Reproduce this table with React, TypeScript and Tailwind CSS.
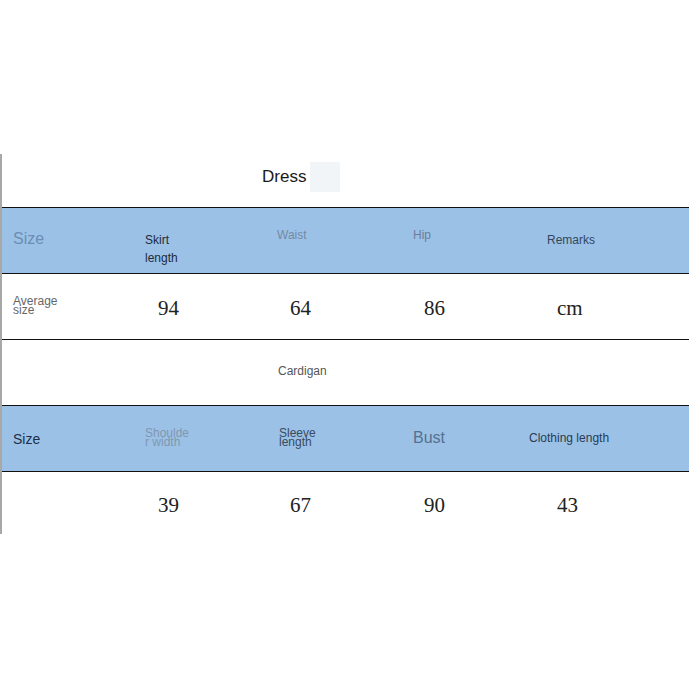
const sans = { fontFamily: '"Liberation Sans", Arial, sans-serif' };

const cols = "grid grid-cols-[143px_132px_136px_134px_1fr]";
const num = "font-['Liberation_Serif',serif] text-[21px] leading-[21px] text-[#222]";

export default function App() {
  return (
    <div className="h-[689px] w-[689px] bg-white" style={sans}>
      <div className="pt-[154px]">
        <div className="border-l-2 border-[#a8a8a8]">
          {/* Dress title */}
          <div className="flex h-[54px] items-start border-b border-[#111] pl-[260px] pt-[14px] leading-[17px]">
            <span className="text-[17px] leading-[17px] text-[#1a1a1a]">Dress</span>
            <span className="ml-[4px] -mt-[6px] h-[30px] w-[30px] bg-[#f2f5f7]" />
          </div>

          {/* Dress header */}
          <div className={`${cols} h-[66px] border-b border-[#111] bg-[#9bc2e6]`}>
            <div className="pl-[11px] pt-[23px] text-[16px] leading-[16px] text-[#6d8db5]">Size</div>
            <div className="pt-[23px] text-[12px] leading-[18px] text-[#1d2b3c]">
              Skirt
              <br />
              length
            </div>
            <div className="pt-[20px] text-[12px] leading-[14px] text-[#7589a5]">Waist</div>
            <div className="pt-[20px] text-[12px] leading-[14px] text-[#6b7e98]">Hip</div>
            <div className="pt-[25px] text-[12px] leading-[14px] text-[#34465c]">Remarks</div>
          </div>

          {/* Dress values */}
          <div className={`${cols} h-[66px] border-b border-[#111]`}>
            <div className="pl-[11px] pt-[23px] text-[12px] leading-[9px] text-[#666]">
              Average
              <br />
              size
            </div>
            <div className={`${num} pl-[13px] pt-[24px]`}>94</div>
            <div className={`${num} pl-[13px] pt-[24px]`}>64</div>
            <div className={`${num} pl-[11px] pt-[24px]`}>86</div>
            <div className={`${num} pl-[10px] pt-[24px]`}>cm</div>
          </div>

          {/* Cardigan title */}
          <div className="h-[66px] border-b border-[#111] pl-[276px] pt-[24px] text-[12px] leading-[14px] text-[#555]">
            Cardigan
          </div>

          {/* Cardigan header */}
          <div className={`${cols} h-[66px] border-b border-[#111] bg-[#9bc2e6]`}>
            <div className="pl-[11px] pt-[26px] text-[14px] leading-[14px] text-[#1d2e4a]">Size</div>
            <div className="pt-[23px] text-[12px] leading-[9px] text-[#8296b0]">
              Shoulde
              <br />
              r width
            </div>
            <div className="pl-[2px] pt-[23px] text-[12px] leading-[9px] text-[#394a62]">
              Sleeve
              <br />
              length
            </div>
            <div className="pt-[24px] text-[16px] leading-[16px] text-[#56708f]">Bust</div>
            <div className="-ml-[18px] pt-[25px] text-[12px] leading-[14px] text-[#2a3a52]">
              Clothing length
            </div>
          </div>

          {/* Cardigan values */}
          <div className={`${cols} h-[62px]`}>
            <div />
            <div className={`${num} pl-[13px] pt-[23px]`}>39</div>
            <div className={`${num} pl-[13px] pt-[23px]`}>67</div>
            <div className={`${num} pl-[11px] pt-[23px]`}>90</div>
            <div className={`${num} pl-[10px] pt-[23px]`}>43</div>
          </div>
        </div>
      </div>
    </div>
  );
}
